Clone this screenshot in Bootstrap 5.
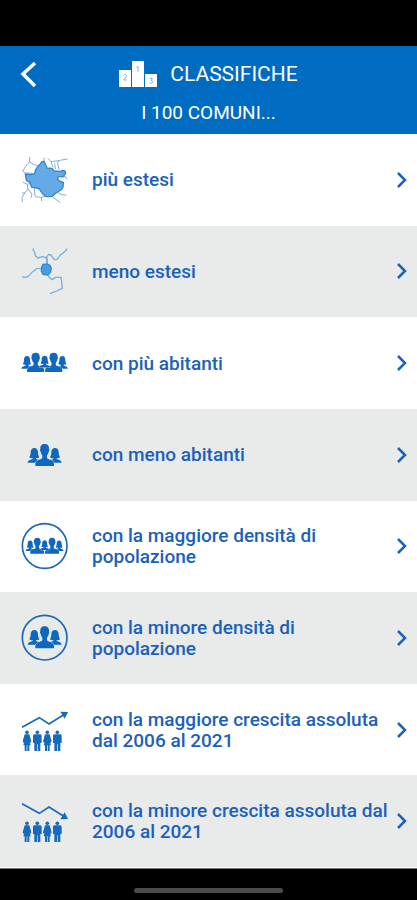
<!DOCTYPE html>
<html lang="it">
<head>
<meta charset="utf-8">
<meta name="viewport" content="width=device-width, initial-scale=1">
<title>Classifiche</title>
<link href="https://cdn.jsdelivr.net/npm/bootstrap@5.3.0/dist/css/bootstrap.min.css" rel="stylesheet">
<style>
body { font-family: Roboto, "Noto Sans", sans-serif; background: #000; }
.status-strip { height: 46px; }
.app-header { background: #006cc1; padding: 12px 20px 9px; }
.head-side { width: 32px; }
.head-title { font-size: 21px; line-height: 32px; gap: 12px; }
.head-sub { font-size: 19px; line-height: 24px; margin-top: 11px; }
.rank-list { --bs-list-group-border-width: 0; border-bottom: 1px solid #fff; }
.rank-row { background: #fff; color: #1b61bb; padding: 0 9px 0 20px; min-height: 90px; font-size: 19px; line-height: 21px; font-weight: 500; }
.rank-row:nth-child(even) { background: #e8ebea; }
.rank-row:hover, .rank-row:focus { color: #1b61bb; }
.rank-label { margin: 0 2px 0 22px; }
.nav-strip { height: 32px; padding-top: 19px; border-top: 1px solid #777; }
.nav-pill { height: 5px; width: 149px; background: #4b4b4b; }
</style>
</head>
<body>
<svg width="0" height="0" class="position-absolute" aria-hidden="true">
  <defs>
    <g id="man"><path d="M0-33C9-33 14-27 13-18C15-17 14-11 12-10C11-4 9-1 7 1V9C9 14 27 13 28 26V33H-28V26C-27 13-9 14-7 9V1C-9-1-11-4-12-10C-14-11-15-17-13-18C-14-27-9-33 0-33Z"/></g>
    <g id="woman"><path d="M0-22C7-22 11-17 11-9C11-2 13 3 15 6C12 9 8 9 5 8V11C9 14 19 13 20 22H-20C-19 13-9 14-5 11V8C-8 9-12 9-15 6C-13 3-11-2-11-9C-11-17-7-22 0-22Z"/></g>
    <g id="crowd">
      <use href="#woman" transform="translate(-53 -1) scale(.82 .86)"/><use href="#woman" transform="translate(53 -1) scale(.82 .86)"/>
      <g stroke="#fff" stroke-width="3" paint-order="stroke"><use href="#man" transform="translate(-27 -1) scale(.92 .88)"/><use href="#man" transform="translate(27 -1) scale(.92 .88)"/></g>
      <use href="#woman" transform="translate(0 -3) scale(.82 .8)" stroke="#fff" stroke-width="2" paint-order="stroke"/>
    </g>
    <g id="standman"><circle cy="5" r="5.500"/><path d="M-9 11H9Q13 11 13 16V37H9V61H1V41H-1V61H-9V37H-13V16Q-13 11-9 11Z"/></g>
    <g id="standwoman"><circle cy="5" r="5.500"/><path d="M-7 11H7L13 32L10 37L8 33L11 44H7V61H1V44H-1V61H-7V44H-11L-8 33L-10 37L-13 32Z"/></g>
    <g id="people"><use href="#standwoman" x="51"/><use href="#standman" x="82"/><use href="#standwoman" x="112"/><use href="#standman" x="142"/></g>
  </defs>
</svg>
<div class="d-flex flex-column min-vh-100">
  <div class="status-strip bg-black"></div>
  <header class="app-header text-white text-center">
    <div class="d-flex align-items-center justify-content-between">
      <button type="button" class="btn p-0 border-0 head-side d-flex" aria-label="Indietro">
        <svg width="18" height="28" viewBox="0 0 18 28" fill="none" stroke="#fff" stroke-width="3.500"><path d="M15 3L3 14L15 26"/></svg>
      </button>
      <h1 class="head-title fw-normal m-0 d-flex align-items-center">
        <svg width="39" height="28" viewBox="0 0 39 28" aria-hidden="true"><path fill="#fff" d="M0 10H12V27H0ZM13 1H25V27H13ZM26 14H38V27H26Z"/><path fill="none" stroke="#8ab5df" d="M4.500 15.500Q5 14 6.500 14.500T7 17L4.500 20H8M17.500 7.500L19 6V12M30.500 18.500H33.500L32 20.500Q35 21 33.500 22.500T30.500 23"/></svg>
        <span>CLASSIFICHE</span>
      </h1>
      <span class="head-side"></span>
    </div>
    <h2 class="head-sub fw-normal mb-0">I 100 COMUNI...</h2>
  </header>
  <main class="list-group list-group-flush rank-list flex-grow-1">
    <a href="#" class="list-group-item list-group-item-action rank-row d-flex align-items-center flex-fill">
      <svg class="flex-shrink-0" width="50" height="50" viewBox="30 30 150 150" fill="none" aria-hidden="true">
        <path stroke="#86abd6" stroke-width="3" d="M59 36V51L50 60L38 78L45 84L68 85M59 51L70 58L82 62M102 38V50M114 40L123 50L129 67M123 50L146 47L155 45L173 42M146 47L143 55L147 73M134 55L136 73M153 97L165 95L172 103M160 89L167 96M64 114L52 118L38 111M52 118L54 132L44 144L36 158L37 171M37 143L45 145M54 132L66 147L63 158M73 128L75 153M75 155L94 157L106 154M94 157L95 168M128 156L151 173M142 142L155 149L169 150"/>
        <path fill="#63aae6" stroke="#3385d0" stroke-width="4" stroke-linejoin="round" d="M102 49L108 62L111 69L126 70L132 78L154 79L157 76L165 78L167 85L160 94L146 95L142 102L148 108L160 112L159 127L153 135L138 144L127 154L109 155L98 147L88 132L76 128L65 127L60 112L49 106L46 87L63 89L74 86L76 76L83 65L90 58L96 50Z"/>
      </svg>
      <span class="rank-label flex-grow-1">più estesi</span>
      <svg class="flex-shrink-0" width="12" height="16" viewBox="0 0 12 16" fill="none" stroke="#1b61bb" stroke-width="2.500" aria-hidden="true"><path d="M2 1L9 8L2 15"/></svg>
    </a>
    <a href="#" class="list-group-item list-group-item-action rank-row d-flex align-items-center flex-fill">
      <svg class="flex-shrink-0" width="50" height="50" viewBox="30 30 150 150" fill="none" aria-hidden="true">
        <path stroke="#79aee0" stroke-width="4" stroke-linejoin="round" d="M68 38L74 49L76 59L84 66L97 62L106 64L112 72V84M110 82L111 62L116 55L123 57L133 71L141 70L152 56L160 51L172 38M95 97L80 98L68 107L55 121L46 124L36 123M114 114L117 123L126 131L137 124L153 124L155 138L157 157L140 165L120 173"/>
        <path fill="#4a9be0" stroke="#3789d2" stroke-width="4" d="M99 85L110 84L120 88L124 97L121 110L112 117L99 115L94 105L95 93Z"/>
      </svg>
      <span class="rank-label flex-grow-1">meno estesi</span>
      <svg class="flex-shrink-0" width="12" height="16" viewBox="0 0 12 16" fill="none" stroke="#1b61bb" stroke-width="2.500" aria-hidden="true"><path d="M2 1L9 8L2 15"/></svg>
    </a>
    <a href="#" class="list-group-item list-group-item-action rank-row d-flex align-items-center flex-fill">
      <svg class="flex-shrink-0" width="50" height="50" viewBox="30 24 150 150" fill="#0f68bf" aria-hidden="true"><use href="#crowd" x="104" y="98"/></svg>
      <span class="rank-label flex-grow-1">con più abitanti</span>
      <svg class="flex-shrink-0" width="12" height="16" viewBox="0 0 12 16" fill="none" stroke="#1b61bb" stroke-width="2.500" aria-hidden="true"><path d="M2 1L9 8L2 15"/></svg>
    </a>
    <a href="#" class="list-group-item list-group-item-action rank-row d-flex align-items-center flex-fill">
      <svg class="flex-shrink-0" width="50" height="50" viewBox="30 27 150 150" fill="#0f68bf" aria-hidden="true"><g stroke="#e8ebea" stroke-width="3" paint-order="stroke"><use href="#woman" x="73" y="103"/><use href="#woman" x="135" y="103"/><use href="#man" x="104" y="102"/></g></svg>
      <span class="rank-label flex-grow-1">con meno abitanti</span>
      <svg class="flex-shrink-0" width="12" height="16" viewBox="0 0 12 16" fill="none" stroke="#1b61bb" stroke-width="2.500" aria-hidden="true"><path d="M2 1L9 8L2 15"/></svg>
    </a>
    <a href="#" class="list-group-item list-group-item-action rank-row d-flex align-items-center flex-fill">
      <svg class="flex-shrink-0" width="50" height="50" viewBox="30 32 150 150" fill="#0f68bf" aria-hidden="true"><circle cx="104" cy="107" r="67" fill="none" stroke="#1b68bb" stroke-width="5"/><use href="#crowd" transform="translate(104 107) scale(.82)"/></svg>
      <span class="rank-label flex-grow-1">con la maggiore densità di popolazione</span>
      <svg class="flex-shrink-0" width="12" height="16" viewBox="0 0 12 16" fill="none" stroke="#1b61bb" stroke-width="2.500" aria-hidden="true"><path d="M2 1L9 8L2 15"/></svg>
    </a>
    <a href="#" class="list-group-item list-group-item-action rank-row d-flex align-items-center flex-fill">
      <svg class="flex-shrink-0" width="50" height="50" viewBox="30 31 150 150" fill="#0f68bf" aria-hidden="true"><circle cx="104" cy="105" r="67" fill="none" stroke="#1b68bb" stroke-width="5"/><g stroke="#e8ebea" stroke-width="3" paint-order="stroke"><use href="#woman" x="73" y="104"/><use href="#woman" x="135" y="104"/><use href="#man" x="104" y="104"/></g></svg>
      <span class="rank-label flex-grow-1">con la minore densità di popolazione</span>
      <svg class="flex-shrink-0" width="12" height="16" viewBox="0 0 12 16" fill="none" stroke="#1b61bb" stroke-width="2.500" aria-hidden="true"><path d="M2 1L9 8L2 15"/></svg>
    </a>
    <a href="#" class="list-group-item list-group-item-action rank-row d-flex align-items-center flex-fill">
      <svg class="flex-shrink-0" width="50" height="50" viewBox="30 26 150 150" fill="#1769bb" aria-hidden="true"><path d="M36 93L88 64L117 83L160 56" fill="none" stroke="#1769bb" stroke-width="5"/><path d="M151 46L174 47L164 67Z"/><use href="#people" y="103"/></svg>
      <span class="rank-label flex-grow-1">con la maggiore crescita assoluta dal 2006 al 2021</span>
      <svg class="flex-shrink-0" width="12" height="16" viewBox="0 0 12 16" fill="none" stroke="#1b61bb" stroke-width="2.500" aria-hidden="true"><path d="M2 1L9 8L2 15"/></svg>
    </a>
    <a href="#" class="list-group-item list-group-item-action rank-row d-flex align-items-center flex-fill">
      <svg class="flex-shrink-0" width="50" height="50" viewBox="30 31 150 150" fill="#1769bb" aria-hidden="true"><path d="M36 54L88 83L117 64L160 91" fill="none" stroke="#1769bb" stroke-width="5"/><path d="M151 101L174 100L164 80Z"/><use href="#people" y="108"/></svg>
      <span class="rank-label flex-grow-1">con la minore crescita assoluta dal 2006 al 2021</span>
      <svg class="flex-shrink-0" width="12" height="16" viewBox="0 0 12 16" fill="none" stroke="#1b61bb" stroke-width="2.500" aria-hidden="true"><path d="M2 1L9 8L2 15"/></svg>
    </a>
  </main>
  <footer class="nav-strip bg-black d-flex justify-content-center"><div class="nav-pill rounded-pill flex-shrink-0"></div></footer>
</div>
<script src="https://cdn.jsdelivr.net/npm/bootstrap@5.3.0/dist/js/bootstrap.bundle.min.js"></script>
</body>
</html>
